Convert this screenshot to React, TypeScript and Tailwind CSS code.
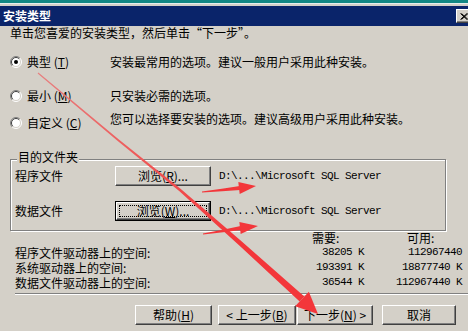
import React from "react";

type Pt = [number, number, number];

// turn a centre line with widths into a filled, tapered shape
function taper(pts: Pt[]) {
  const left: string[] = [];
  const right: string[] = [];
  pts.forEach((p, i) => {
    const a = pts[Math.max(0, i - 1)];
    const b = pts[Math.min(pts.length - 1, i + 1)];
    const dx = b[0] - a[0];
    const dy = b[1] - a[1];
    const len = Math.hypot(dx, dy) || 1;
    const nx = -dy / len;
    const ny = dx / len;
    left.push(`${p[0] + (nx * p[2]) / 2},${p[1] + (ny * p[2]) / 2}`);
    right.unshift(`${p[0] - (nx * p[2]) / 2},${p[1] - (ny * p[2]) / 2}`);
  });
  return [...left, ...right].join(" ");
}

function head(tx: number, ty: number, bx: number, by: number, hw: number) {
  const dx = tx - bx;
  const dy = ty - by;
  const len = Math.hypot(dx, dy) || 1;
  const nx = -dy / len;
  const ny = dx / len;
  return `${tx},${ty} ${bx + nx * hw},${by + ny * hw} ${bx - nx * hw},${by - ny * hw}`;
}

function Radio({ checked }: { checked?: boolean }) {
  return (
    <svg width="12" height="12" viewBox="0 0 12 12" className="shrink-0">
      <circle cx="6" cy="6" r="5" fill="#fff" />
      <path d="M2.1 9.9 A5.5 5.5 0 0 1 9.9 2.1" fill="none" stroke="#808080" />
      <path d="M9.9 2.1 A5.5 5.5 0 0 1 2.1 9.9" fill="none" stroke="#fff" />
      <path d="M2.8 9.2 A4.5 4.5 0 0 1 9.2 2.8" fill="none" stroke="#404040" />
      <path d="M9.2 2.8 A4.5 4.5 0 0 1 2.8 9.2" fill="none" stroke="#d4d0c8" />
      {checked && <circle cx="6" cy="6" r="2" fill="#000" />}
    </svg>
  );
}

function Btn({
  children,
  className = "",
  focused,
}: {
  children: React.ReactNode;
  className?: string;
  focused?: boolean;
}) {
  if (focused) {
    return (
      <div className={`flex h-[20px] border border-black ${className}`}>
        <div className="flex flex-1 border border-t-white border-l-white border-r-[#404040] border-b-[#404040] p-[2px] shadow-[inset_-1px_-1px_0_#808080]">
          <div className="flex flex-1 items-center justify-center border border-dotted border-black">
            {children}
          </div>
        </div>
      </div>
    );
  }
  return (
    <div
      className={`flex h-[20px] items-center justify-center border border-t-white border-l-white border-r-[#404040] border-b-[#404040] shadow-[inset_-1px_-1px_0_#808080] ${className}`}
    >
      {children}
    </div>
  );
}

const U = ({ children }: { children: React.ReactNode }) => (
  <span className="underline">{children}</span>
);

const mono =
  "font-['Liberation_Mono','DejaVu_Sans_Mono',monospace] text-[11px] tracking-[-0.6px]";

export default function App() {
  const red = "#f3363a";
  return (
    <div className="relative h-[331px] w-[468px] overflow-hidden bg-[#d4d0c8] font-['Noto_Sans_CJK_SC',sans-serif] text-[12px] leading-[14px] text-black">
      <div className="h-[3px] bg-[#128784]" />
      <div className="h-[1px] bg-[#e6eeee]" />
      <div className="h-[2px] bg-[#d4d0c8]" />

      {/* title bar */}
      <div className="flex h-[20px] items-center justify-between bg-[#0a246a] pl-[3px]">
        <span className="font-bold text-white">安装类型</span>
        <div className="mr-[-4px] flex h-[14px] w-[16px] items-center justify-center border border-t-white border-l-white border-r-[#404040] border-b-[#404040] bg-[#d4d0c8] shadow-[inset_-1px_-1px_0_#808080]">
          <svg width="8" height="7" viewBox="0 0 8 7">
            <path d="M0.5 0.5 L7 6.5 M1.5 0.5 L8 6.5 M7 0.5 L0.5 6.5 M8 0.5 L1.5 6.5" stroke="#000" strokeWidth="1" />
          </svg>
        </div>
      </div>

      <p className="pl-[10px]">单击您喜爱的安装类型，然后单击“下一步”。</p>

      {/* setup types */}
      <div className="mt-[15px] flex h-[14px] items-center">
        <div className="flex w-[110px] items-center gap-[5px] pl-[10px]">
          <Radio checked />
          <span>
            典型 (<U>T</U>)
          </span>
        </div>
        <span>安装最常用的选项。建议一般用户采用此种安装。</span>
      </div>
      <div className="mt-[20px] flex h-[14px] items-center">
        <div className="flex w-[110px] items-center gap-[5px] pl-[10px]">
          <Radio />
          <span>
            最小 (<U>M</U>)
          </span>
        </div>
        <span>只安装必需的选项。</span>
      </div>
      <div className="mt-[9px] flex items-start">
        <div className="mt-[4px] flex h-[14px] w-[110px] items-center gap-[5px] pl-[10px]">
          <Radio />
          <span>
            自定义 (<U>C</U>)
          </span>
        </div>
        <span>您可以选择要安装的选项。建议高级用户采用此种安装。</span>
      </div>

      {/* destination folder group */}
      <div className="relative mt-[29px] ml-[10px] h-[72px] w-[436px] border border-[#808080] pt-[6px] shadow-[inset_1px_1px_0_#fff,1px_1px_0_#fff]">
        <span className="absolute -top-[10px] left-[6px] bg-[#d4d0c8] px-[1px]">目的文件夹</span>
        <div className="flex h-[20px] items-center">
          <span className="w-[104px] pl-[4px]">程序文件</span>
          <Btn className="w-[96px]">
            浏览(<U>R</U>)...
          </Btn>
          <span className={`ml-[8px] ${mono}`}>{"D:\\...\\Microsoft SQL Server"}</span>
        </div>
        <div className="mt-[15px] flex h-[20px] items-center">
          <span className="w-[104px] pl-[4px]">数据文件</span>
          <Btn className="w-[96px]" focused>
            浏览(<U>W</U>)...
          </Btn>
          <span className={`ml-[8px] ${mono}`}>{"D:\\...\\Microsoft SQL Server"}</span>
        </div>
      </div>

      {/* disk space */}
      <div className="ml-[15px]">
        <div className="grid h-[14px] grid-cols-[297px_52px_98px]">
          <span />
          <span>需要:</span>
          <span className="pl-[43px]">可用:</span>
        </div>
        {[
          ["程序文件驱动器上的空间:", "38205 K", "112967440"],
          ["系统驱动器上的空间:", "193391 K", "18877740 K"],
          ["数据文件驱动器上的空间:", "36544 K", "112967440 K"],
        ].map(([label, need, free]) => (
          <div key={label} className="grid h-[15px] grid-cols-[297px_52px_98px] items-center leading-[15px]">
            <span>{label}</span>
            <span className={`text-right ${mono}`}>{need}</span>
            <span className={`text-right ${mono}`}>{free}</span>
          </div>
        ))}
      </div>

      <div className="mt-[3px] ml-[15px] h-[2px] border-t border-b border-t-[#808080] border-b-white" />

      {/* wizard buttons */}
      <div className="mt-[10px] flex pl-[135px]">
        <Btn className="w-[77px]">
          帮助(<U>H</U>)
        </Btn>
        <Btn className="ml-[6px] w-[78px]">
          &lt; 上一步(<U>B</U>)
        </Btn>
        <Btn className="ml-[1px] w-[76px]">
          下一步(<U>N</U>) &gt;
        </Btn>
        <Btn className="ml-[9px] w-[74px]">取消</Btn>
      </div>

      {/* red annotation arrows drawn over the dialog */}
      <svg className="pointer-events-none absolute inset-0" width="468" height="331" viewBox="0 0 468 331">
        <defs>
          <linearGradient id="fade" gradientUnits="userSpaceOnUse" x1="38" y1="73" x2="240" y2="243">
            <stop offset="0" stopColor="#e78080" />
            <stop offset="0.55" stopColor="#ef5555" />
            <stop offset="1" stopColor={red} />
          </linearGradient>
        </defs>
        <polygon
          points={taper([
            [38, 73, 1.2],
            [118, 140, 1.8],
            [180, 190, 2.6],
            [240, 243, 4.5],
            [302, 299, 7],
          ])}
          fill="url(#fade)"
        />
        <polygon points={head(318, 314, 302, 299, 10)} fill={red} />

        <polygon points={taper([[202, 192, 1], [222, 190, 2.5], [240, 188, 4]])} fill={red} />
        <polygon points={head(256, 186, 239, 188, 6)} fill={red} />

        <polygon points={taper([[203, 234, 1], [223, 231, 2.5], [241, 228, 4]])} fill={red} />
        <polygon points={head(258, 226, 240, 228, 6)} fill={red} />
      </svg>
    </div>
  );
}
